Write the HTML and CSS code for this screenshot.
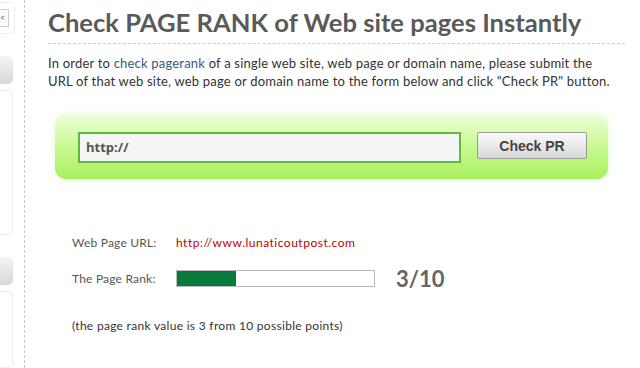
FILE: index.html
```html
<!DOCTYPE html>
<html lang="en">
<head>
    <meta charset="UTF-8">
    <title>Check PAGE RANK</title>
    <link rel="stylesheet" href="styles.css">
</head>
<body>
    <div class="page">
        <aside class="sidebar">
            <div class="side-top"><span class="side-close">&lt;</span></div>
            <div class="side-btn"></div>
            <div class="side-panel"></div>
            <div class="side-btn"></div>
            <div class="side-panel side-panel-last"></div>
        </aside>

        <main class="content">
            <h1 class="title">Check PAGE RANK of Web site pages Instantly</h1>
            <p class="intro">
                In order to <a href="#" class="intro-link">check pagerank</a> of a single web site, web page or domain name, please submit the<br>
                URL of that web site, web page or domain name to the form below and click "Check PR" button.
            </p>

            <form class="check-box">
                <input type="text" class="url-input" value="http://">
                <button type="button" class="check-btn">Check PR</button>
            </form>

            <div class="result">
                <div class="result-row">
                    <span class="result-label">Web Page URL:</span>
                    <a href="#" class="result-url">http://www.lunaticoutpost.com</a>
                </div>
                <div class="result-row">
                    <span class="result-label">The Page Rank:</span>
                    <div class="rank-bar"><div class="rank-fill" style="width: 30%"></div></div>
                    <span class="rank-value">3/10</span>
                </div>
                <p class="result-note">(the page rank value is 3 from 10 possible points)</p>
            </div>
        </main>
    </div>
</body>
</html>
```

FILE: styles.css
```css
body {
    margin: 0;
    font-family: Lato, "DejaVu Sans", sans-serif;
    background-color: #fff;
    color: #333;
}

.page {
    display: flex;
    height: 368px;
    overflow: hidden;
}

.sidebar {
    width: 24px;
    flex-shrink: 0;
    border-right: 1px dashed #c8c8c8;
    display: flex;
    flex-direction: column;
}

.side-top {
    height: 32px;
    width: 14px;
    margin-top: 2px;
    border: 1px solid #eee;
    border-left: none;
    border-radius: 0 6px 6px 0;
    display: flex;
    align-items: center;
}

.side-close {
    display: block;
    width: 8px;
    height: 16px;
    border: 1px solid #ccc;
    border-left: none;
    font-size: 9px;
    line-height: 16px;
    color: #666;
    background: #fafafa;
}

.side-btn {
    width: 13px;
    height: 30px;
    margin-top: 22px;
    border-radius: 0 5px 5px 0;
    background: linear-gradient(#f4f4f4, #d8d8d8);
}

.side-panel {
    width: 12px;
    height: 152px;
    margin-top: 6px;
    border: 1px solid #eee;
    border-left: none;
    border-radius: 0 4px 4px 0;
}

.side-panel-last {
    height: 80px;
}

.content {
    flex: 1;
    padding: 0 15px 0 23px;
}

.title {
    margin: 8px 0 0;
    padding-bottom: 7px;
    border-bottom: 1px dashed #ccc;
    font-size: 25.6px;
    line-height: 28px;
    font-weight: bold;
    color: #5a5a5a;
    white-space: nowrap;
}

.intro {
    margin: 10px 0 0;
    font-size: 13px;
    line-height: 18px;
    letter-spacing: 0.2px;
    color: #333;
    white-space: nowrap;
}

.intro-link {
    color: #335a85;
    text-decoration: none;
}

.check-box {
    display: flex;
    align-items: center;
    width: 509px;
    height: 64px;
    margin: 25px 0 0 7px;
    padding: 0 21px 0 23px;
    border-radius: 11px;
    background: linear-gradient(#ecffd8, #c8fa90 50%, #a8f060);
    box-shadow: 0 0 6px rgba(168, 240, 96, 0.35);
}

.url-input {
    width: 383px;
    height: 31px;
    padding: 0 6px;
    box-sizing: border-box;
    border: 2px solid #62b840;
    background: #f4f6f4;
    font-family: "Open Sans", sans-serif;
    font-size: 13px;
    font-weight: bold;
    color: #555;
    outline: none;
}

.check-btn {
    margin-left: auto;
    width: 110px;
    height: 27px;
    margin-top: -3px;
    border: 1px solid #999;
    border-radius: 2px;
    background: linear-gradient(#fafafa, #e6e6e6 60%, #d8d8d8);
    font-family: "Liberation Sans", Arial, sans-serif;
    font-size: 14px;
    font-weight: bold;
    color: #444;
}

.result {
    margin: 54px 0 0 24px;
}

.result-row {
    display: flex;
    align-items: center;
    height: 18px;
    margin-bottom: 18px;
}

.result-label {
    width: 104px;
    font-size: 12px;
    letter-spacing: 0.2px;
    color: #555;
}

.result-url {
    font-size: 12px;
    letter-spacing: 0.5px;
    color: #c00000;
    text-decoration: none;
}

.rank-bar {
    width: 197px;
    height: 15px;
    border: 1px solid #bbb;
}

.rank-fill {
    height: 100%;
    background: #0a7a3c;
}

.rank-value {
    margin-left: 21px;
    font-size: 22px;
    font-weight: bold;
    color: #666;
}

.result-note {
    margin: 31px 0 0;
    font-size: 12px;
    letter-spacing: 0.3px;
    color: #333;
}
```
